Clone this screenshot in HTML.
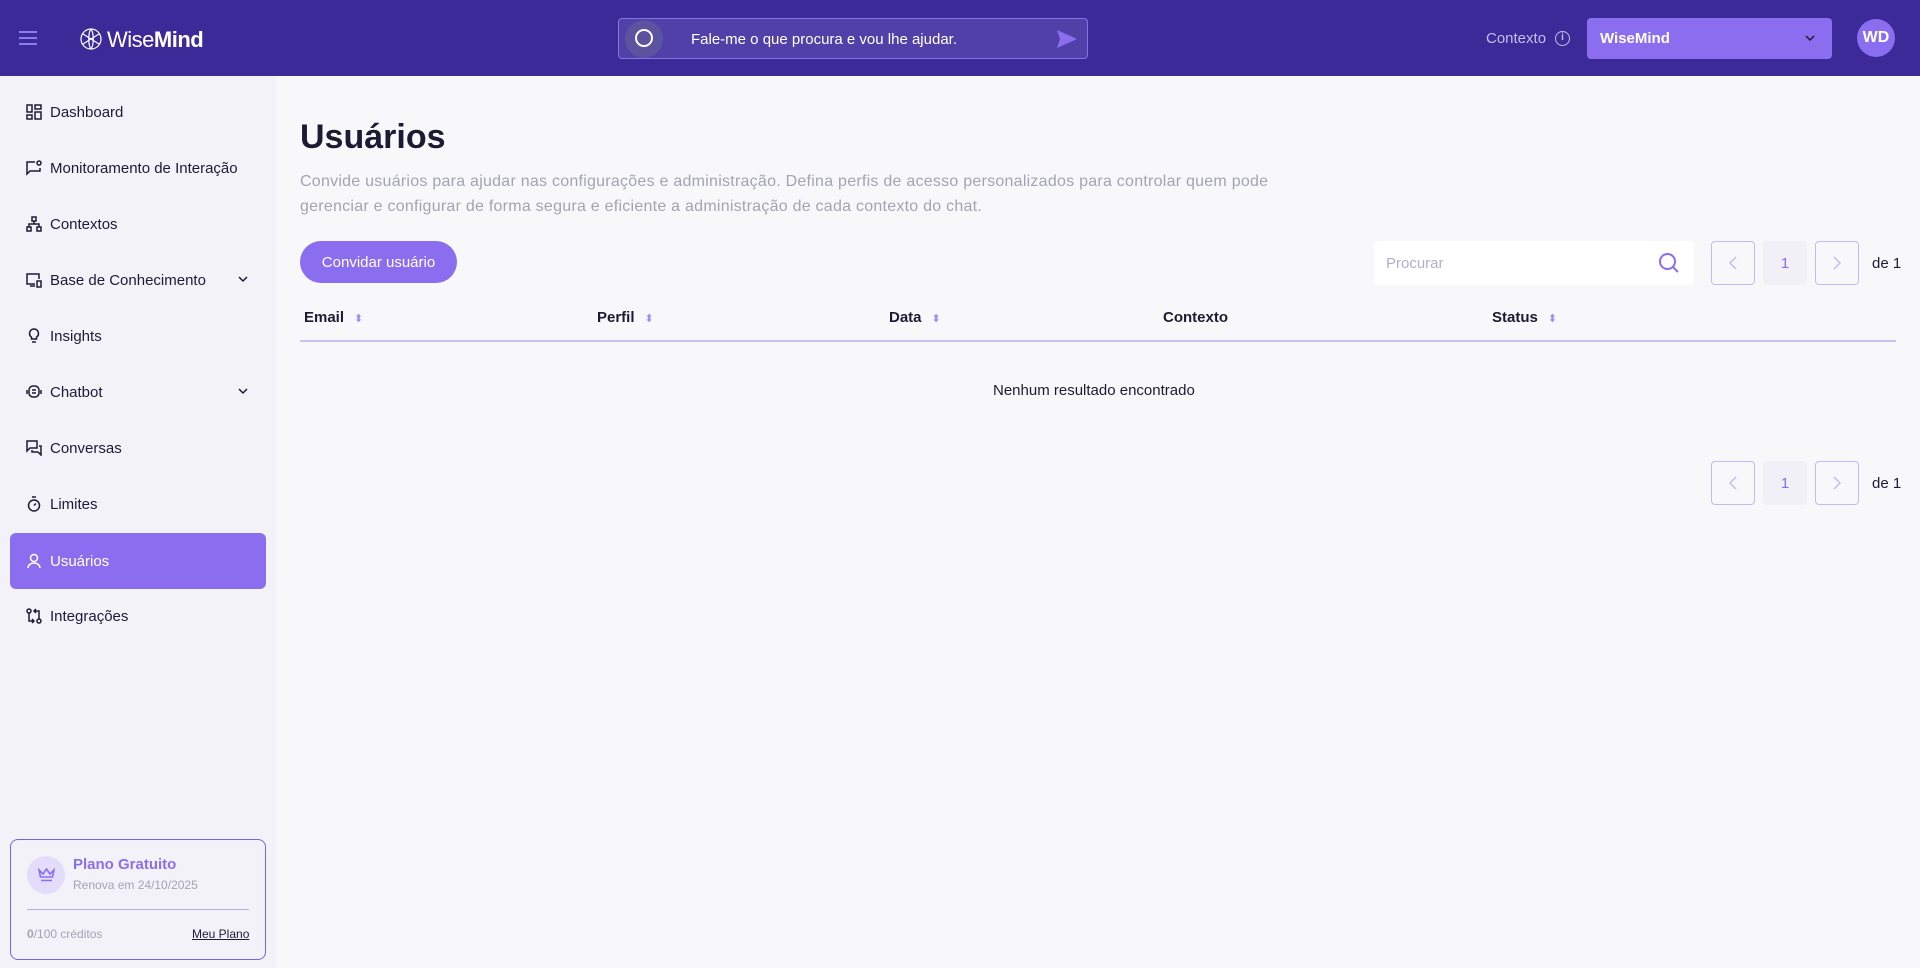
<!DOCTYPE html>
<html><head><meta charset="utf-8"><style>
*{box-sizing:border-box;margin:0;padding:0}
body{width:1920px;height:968px;overflow:hidden;font-family:"Liberation Sans",sans-serif;background:#f8f8fb;color:#1d1a33;position:relative}
.hdr{position:absolute;left:0;top:0;width:1920px;height:76px;background:#3d2a99}
.side{position:absolute;left:0;top:76px;width:276px;height:892px;background:#f3f2f8}
.item{position:absolute;left:10px;width:256px;height:56px;display:flex;align-items:center;padding-left:40px;font-size:15px;color:#1d1a33}
.item svg{position:absolute;left:16px;top:20px}
.item.act{background:#8b6ef0;color:#fff;border-radius:6px}
.chev{position:absolute;right:18px;top:22px}
.abs{position:absolute}
.pg{position:absolute;width:44px;height:44px;border:1px solid #c4b8f5;border-radius:4px;display:flex;align-items:center;justify-content:center}
.pn{position:absolute;width:44px;height:44px;background:#f1f0f7;border-radius:4px;color:#8b6ef0;font-size:15px;display:flex;align-items:center;justify-content:center}
.th{position:absolute;top:309px;font-size:15px;font-weight:bold;color:#1d1a33}
.th span{color:#a08ef2;font-size:11px;margin-left:10px;font-weight:normal}
</style></head><body>
<div class="hdr">
 <svg class="abs" style="left:19px;top:31px" width="18" height="14"><path d="M0 1h18M0 7h18M0 13h18" stroke="#8b7cf0" stroke-width="2"/></svg>
 <svg class="abs" style="left:79px;top:27px" width="24" height="24" viewBox="0 0 24 24" fill="none" stroke="#fff" stroke-width="1.2"><path d="M12 2C6 2 2 7 2 12s4 10 10 10 10-5 10-10S18 2 12 2zM12 2c-3 4-3 16 0 20M12 2c3 4 3 16 0 20M4 7l16 10M4 17L20 7"/></svg>
 <div class="abs" style="left:107px;top:27px;font-size:22px;color:#fff;letter-spacing:-0.5px"><span style="font-weight:300">Wise</span><b>Mind</b></div>
 <div class="abs" style="left:618px;top:18px;width:470px;height:41px;background:#5140a8;border:1px solid #8573e8;border-radius:4px">
  <div class="abs" style="left:6px;top:1px;width:38px;height:38px;border-radius:50%;background:#5c52a0"></div>
  <div class="abs" style="left:16px;top:10px;width:18px;height:18px;border-radius:50%;border:2.5px solid #fff"></div>
  <div class="abs" style="left:72px;top:12px;font-size:15px;color:#fff">Fale-me o que procura e vou lhe ajudar.</div>
  <svg class="abs" style="left:437px;top:9px" width="22" height="22" viewBox="0 0 22 22"><path d="M1 2L21 11 1 20 4 11z" fill="#8b6ef0"/></svg>
 </div>
 <div class="abs" style="left:1486px;top:30px;font-size:15px;color:#c5bdf0">Contexto</div>
 <div class="abs" style="left:1555px;top:31px;width:15px;height:15px;border-radius:50%;border:1.5px solid #c5bdf0;color:#c5bdf0;font-size:10px;text-align:center;line-height:12px;font-weight:bold">i</div>
 <div class="abs" style="left:1587px;top:18px;width:245px;height:41px;background:#8b6ef0;border-radius:4px">
  <div class="abs" style="left:13px;top:12px;font-size:15px;color:#fff;font-weight:bold">WiseMind</div>
  <svg class="abs" style="left:218px;top:17px" width="10" height="7"><path d="M1 1l4 4 4-4" stroke="#1d1a33" stroke-width="1.5" fill="none"/></svg>
 </div>
 <div class="abs" style="left:1857px;top:19px;width:38px;height:38px;border-radius:50%;background:#8b6ef0;color:#fff;font-size:16px;font-weight:bold;display:flex;align-items:center;justify-content:center">WD</div>
</div>
<div class="side">
 <div class="item" style="top:8px"><svg width="16" height="16" fill="none" stroke="#1d1a33" stroke-width="1.5"><rect x="1" y="1" width="5" height="7"/><rect x="9" y="1" width="6" height="4"/><rect x="1" y="11" width="5" height="4"/><rect x="9" y="8" width="6" height="7"/></svg>Dashboard</div>
 <div class="item" style="top:64px"><svg width="16" height="16" fill="none" stroke="#1d1a33" stroke-width="1.5"><path d="M9 2H1v12l3-3h10V8"/><circle cx="13" cy="3" r="2"/></svg>Monitoramento de Interação</div>
 <div class="item" style="top:120px"><svg width="16" height="16" fill="none" stroke="#1d1a33" stroke-width="1.5"><rect x="6" y="1" width="4" height="4"/><rect x="1" y="11" width="4" height="4"/><rect x="11" y="11" width="4" height="4"/><path d="M8 5v3M3 11V8h10v3"/></svg>Contextos</div>
 <div class="item" style="top:176px"><svg width="16" height="16" fill="none" stroke="#1d1a33" stroke-width="1.5"><path d="M9 12H1V2h12v5M4 14h5"/><rect x="11" y="9" width="4" height="6"/></svg>Base de Conhecimento<svg class="chev" width="10" height="7" style="left:auto;top:24px"><path d="M1 1l4 4 4-4" stroke="#1d1a33" stroke-width="1.5" fill="none"/></svg></div>
 <div class="item" style="top:232px"><svg width="16" height="16" fill="none" stroke="#1d1a33" stroke-width="1.5"><path d="M8 1a4.5 4.5 0 00-2.5 8.2V11h5V9.2A4.5 4.5 0 008 1zM6 14h4"/></svg>Insights</div>
 <div class="item" style="top:288px"><svg width="16" height="16" fill="none" stroke="#1d1a33" stroke-width="1.5"><rect x="3" y="2" width="10" height="11" rx="4"/><path d="M1 6v4M15 6v4M6 6h4M6 9h4"/></svg>Chatbot<svg class="chev" width="10" height="7" style="left:auto;top:24px"><path d="M1 1l4 4 4-4" stroke="#1d1a33" stroke-width="1.5" fill="none"/></svg></div>
 <div class="item" style="top:344px"><svg width="16" height="16" fill="none" stroke="#1d1a33" stroke-width="1.5"><path d="M1 1h10v7H4L1 11zM13 6h2v9l-3-3H6v-2"/></svg>Conversas</div>
 <div class="item" style="top:400px"><svg width="16" height="16" fill="none" stroke="#1d1a33" stroke-width="1.5"><circle cx="8" cy="9.5" r="5.5"/><path d="M6 1h4M8 9.5l2-2"/></svg>Limites</div>
 <div class="item act" style="top:457px"><svg width="16" height="16" fill="none" stroke="#fff" stroke-width="1.5"><circle cx="8" cy="5" r="3.5"/><path d="M2 15c0-3 3-5 6-5s6 2 6 5"/></svg>Usuários</div>
 <div class="item" style="top:512px"><svg width="16" height="16" fill="none" stroke="#1d1a33" stroke-width="1.5"><circle cx="3" cy="3" r="2"/><circle cx="13" cy="13" r="2"/><path d="M3 5v8h5M13 11V3H8M6 11l2 2-2 2M10 1L8 3l2 2"/></svg>Integrações</div>
 <div class="abs" style="left:10px;top:763px;width:256px;height:121px;border:1.5px solid #7a62e0;border-radius:8px">
  <div class="abs" style="left:16px;top:16px;width:38px;height:38px;border-radius:50%;background:#e3dcfb"></div>
  <svg class="abs" style="left:27px;top:28px" width="17" height="14" fill="none" stroke="#8b6ef0" stroke-width="1.6"><path d="M1 2l4 4 3.5-5 3.5 5 4-4-1.5 7H2.5zM3 12.5h11"/></svg>
  <div class="abs" style="left:62px;top:16px;font-size:15px;font-weight:bold;color:#8b6ef0">Plano Gratuito</div>
  <div class="abs" style="left:62px;top:38px;font-size:12px;color:#a5a3b3">Renova em 24/10/2025</div>
  <div class="abs" style="left:16px;top:69px;width:222px;height:1px;background:#b4aedd"></div>
  <div class="abs" style="left:16px;top:87px;font-size:12px;color:#a5a3b3"><b>0</b>/100 créditos</div>
  <div class="abs" style="left:181px;top:87px;font-size:12px;color:#1d1a33;text-decoration:underline">Meu Plano</div>
 </div>
</div>
<div class="abs" style="left:300px;top:118px;font-size:34px;font-weight:bold;color:#1d1a33">Usuários</div>
<div class="abs" style="left:300px;top:169px;width:1200px;font-size:16px;line-height:25px;color:#a3a3b3;letter-spacing:0.25px;white-space:nowrap">Convide usuários para ajudar nas configurações e administração. Defina perfis de acesso personalizados para controlar quem pode<br>gerenciar e configurar de forma segura e eficiente a administração de cada contexto do chat.</div>
<div class="abs" style="left:300px;top:241px;width:157px;height:42px;border-radius:21px;background:#8b6ef0;color:#fff;font-size:15px;display:flex;align-items:center;justify-content:center">Convidar usuário</div>
<div class="abs" style="left:1374px;top:241px;width:320px;height:44px;background:#fff;border-radius:4px">
 <div class="abs" style="left:12px;top:14px;font-size:15px;color:#b3aecb">Procurar</div>
 <svg class="abs" style="left:284px;top:11px" width="22" height="22" fill="none" stroke="#8b6ef0" stroke-width="2"><circle cx="9.5" cy="9.5" r="7.5"/><path d="M15 15l5 5"/></svg>
</div>
<div class="pg" style="left:1711px;top:241px"><svg width="8" height="14"><path d="M7 1L1 7l6 6" stroke="#c4b8f5" stroke-width="1.5" fill="none"/></svg></div>
<div class="pn" style="left:1763px;top:241px">1</div>
<div class="pg" style="left:1815px;top:241px"><svg width="8" height="14"><path d="M1 1l6 6-6 6" stroke="#c4b8f5" stroke-width="1.5" fill="none"/></svg></div>
<div class="abs" style="left:1872px;top:255px;font-size:15px">de 1</div>
<div class="th" style="left:304px">Email<span>⬍</span></div>
<div class="th" style="left:597px">Perfil<span>⬍</span></div>
<div class="th" style="left:889px">Data<span>⬍</span></div>
<div class="th" style="left:1163px">Contexto</div>
<div class="th" style="left:1492px">Status<span>⬍</span></div>
<div class="abs" style="left:300px;top:340px;width:1596px;height:1.5px;background:#c8c2ef"></div>
<div class="abs" style="left:993px;top:382px;font-size:15px">Nenhum resultado encontrado</div>
<div class="pg" style="left:1711px;top:461px"><svg width="8" height="14"><path d="M7 1L1 7l6 6" stroke="#c4b8f5" stroke-width="1.5" fill="none"/></svg></div>
<div class="pn" style="left:1763px;top:461px">1</div>
<div class="pg" style="left:1815px;top:461px"><svg width="8" height="14"><path d="M1 1l6 6-6 6" stroke="#c4b8f5" stroke-width="1.5" fill="none"/></svg></div>
<div class="abs" style="left:1872px;top:475px;font-size:15px">de 1</div>
</body></html>
